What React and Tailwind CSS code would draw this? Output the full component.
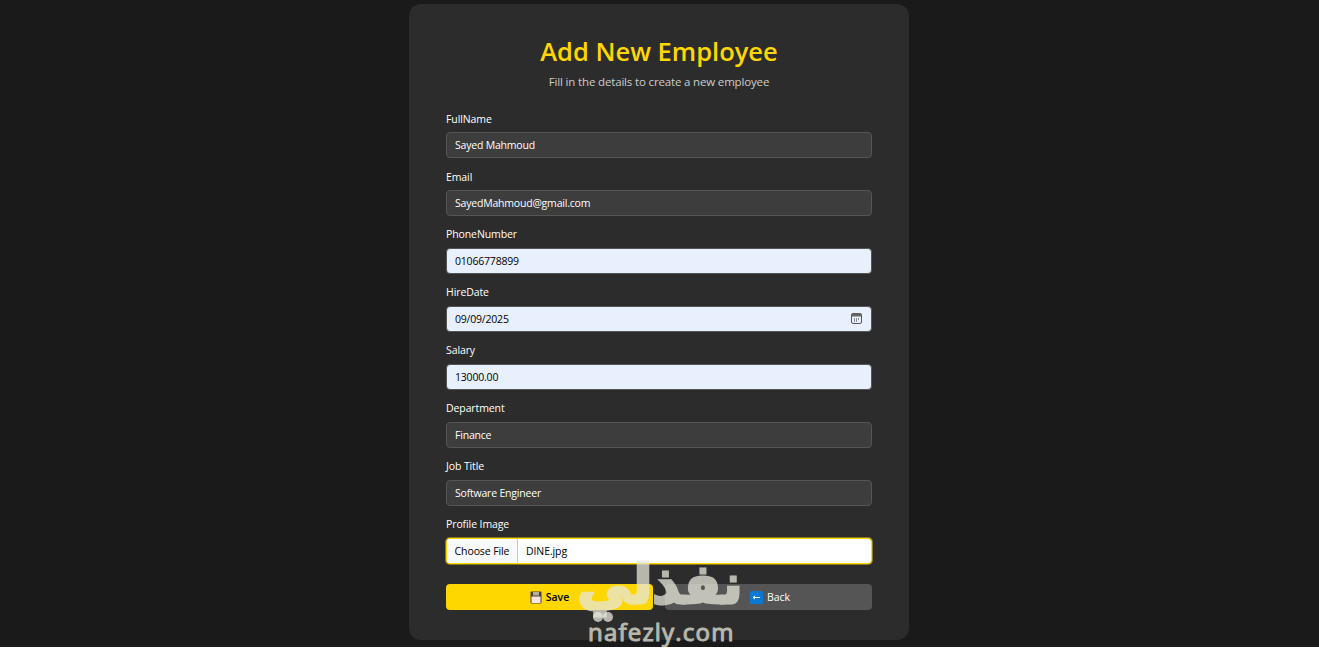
const fields = [
   { label: "FullName", value: "Sayed Mahmoud", labelClass: "mb-[5px] pt-px" },
   { label: "Email", value: "SayedMahmoud@gmail.com", labelClass: "mb-[5px] pt-px" },
   { label: "PhoneNumber", value: "01066778899", filled: true, labelClass: "mb-[6px]" },
   { label: "HireDate", value: "09/09/2025", filled: true, date: true, labelClass: "mb-[6px]" },
   { label: "Salary", value: "13000.00", filled: true, labelClass: "mb-[6px]" },
   { label: "Department", value: "Finance", labelClass: "mb-[6px]" },
   { label: "Job Title", value: "Software Engineer", labelClass: "mb-[6px]" },
];

const SaveIcon = () => (
   <svg width="12" height="13" viewBox="0 0 12 13">
      <rect x="0.5" y="0.5" width="11" height="12" rx="1" fill="#4a4038" />
      <rect x="1.5" y="5.5" width="9" height="6.5" fill="#f8e4e6" />
      <rect x="3" y="1" width="6" height="3.5" fill="#b5ae9f" />
   </svg>
);

const BackIcon = () => (
   <svg width="13" height="13" viewBox="0 0 13 13">
      <rect width="13" height="13" rx="1.5" fill="#0b78d4" />
      <path d="M3 6.5h7M3 6.5l2-1.6M3 6.5l2 1.6" stroke="#fff" strokeWidth="1" fill="none" />
   </svg>
);

const CalendarIcon = () => (
   <svg width="11" height="11" viewBox="0 0 11 11">
      <rect x="0.5" y="0.5" width="10" height="10" rx="1.5" fill="#e8f0fe" stroke="#555555" />
      <rect x="0.5" y="0.5" width="10" height="3" rx="1" fill="#666666" />
      <path d="M3 5.5h1v1H3zM5 5.5h1v1H5zM7 5.5h1v1H7zM3 7.5h1v1H3zM5 7.5h1v1H5z" fill="#333333" />
   </svg>
);

const App = () => {
   return (
      <div className="relative h-[647px] overflow-hidden bg-[#1a1a1a] pt-1 pr-px font-['Open_Sans',sans-serif]">
         <div className="mx-auto h-[636px] w-[500px] rounded-xl bg-[#2c2c2c] px-[37px] pt-[31px]">
            {/* Header */}
            <h1 className="text-center text-[25.5px] leading-[32px] font-semibold text-[#ffd700]">
               Add New Employee
            </h1>
            <p className="mt-[7px] text-center text-[11.5px] leading-[16px] tracking-[-0.16px] text-[#cccccc]">
               Fill in the details to create a new employee
            </p>

            {/* Form */}
            <form className="mt-[21px]">
               {fields.map((field) => (
                  <div key={field.label} className="mb-[11px]">
                     <label className={`block text-[10.5px] leading-[15px] tracking-[-0.1px] text-white ${field.labelClass}`}>
                        {field.label}
                     </label>
                     <div className="relative">
                        <input
                           type="text"
                           readOnly
                           value={field.value}
                           className={`block h-[26px] w-full rounded border px-2 text-[10.5px] tracking-[-0.2px] outline-none ${
                              field.filled
                                 ? "border-[#555555] bg-[#e8f0fe] text-black"
                                 : "border-[#555555] bg-[#3d3d3d] text-white"
                           }`}
                        />
                        {field.date && (
                           <div className="absolute top-[7px] right-[10px] flex">
                              <CalendarIcon />
                           </div>
                        )}
                     </div>
                  </div>
               ))}

               {/* Profile Image */}
               <div>
                  <label className="mb-[6px] block text-[10.5px] leading-[15px] tracking-[-0.1px] text-white">
                     Profile Image
                  </label>
                  <div className="flex h-[26px] items-center overflow-hidden rounded border border-[#ffd700] bg-white text-[10.5px] tracking-[-0.1px] text-black shadow-[0_0_0_1px_#8a7a1a]">
                     <button
                        type="button"
                        className="h-full w-[71px] border-r border-[#ffd700] bg-[#f8f9fa] pt-px text-center"
                     >
                        Choose File
                     </button>
                     <span className="pt-px pl-2">DINE.jpg</span>
                  </div>
               </div>

               {/* Buttons */}
               <div className="mt-[20px] grid grid-cols-2 gap-3">
                  <button
                     type="button"
                     className="flex h-[26px] items-center justify-center gap-1 rounded bg-[#ffd700] text-[10.5px] font-semibold text-black"
                  >
                     <SaveIcon />
                     <span className="pt-px">Save</span>
                  </button>
                  <button
                     type="button"
                     className="flex h-[26px] items-center justify-center gap-1 rounded bg-[#555555] pl-[3px] text-[10.5px] tracking-[-0.1px] text-white"
                  >
                     <BackIcon />
                     <span className="pt-px">Back</span>
                  </button>
               </div>
            </form>
         </div>

         {/* Watermark */}
         <div
            dir="rtl"
            className="absolute top-[550px] left-[575px] w-[170px] text-center font-['DejaVu_Sans',sans-serif] text-[54px] leading-[70px] font-bold text-[#e6e6da] opacity-75 [-webkit-text-stroke:3px_#e6e6da]"
         >
            نفذلي
         </div>
         <div className="absolute top-[612px] left-[593px] h-[10px] w-[10px] rounded-full bg-[#e6e6da] opacity-75" />
         <div className="absolute top-[612px] left-[603px] h-[10px] w-[10px] rounded-full bg-[#e6e6da] opacity-75" />
         <div className="absolute top-[618px] left-[588px] text-[24px] leading-[28px] tracking-[1.2px] text-[#e6e6da] opacity-75 [-webkit-text-stroke:1px_#e6e6da]">
            nafezly.com
         </div>
      </div>
   );
};

export default App;
